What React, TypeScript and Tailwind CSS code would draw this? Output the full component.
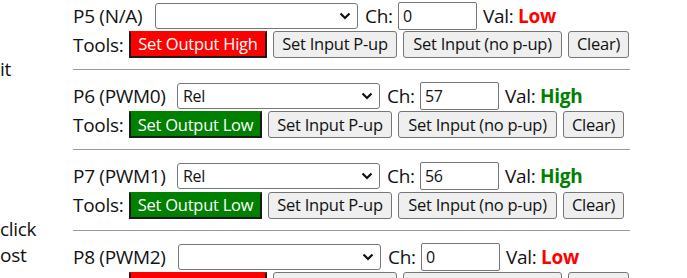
import React from 'react';

type Pin = {
  label: string;
  labelW: string;
  mode: string;
  ch: string;
  high: boolean;
};

const pins: Pin[] = [
  { label: 'P5 (N/A)', labelW: 'w-[82px]', mode: '', ch: '0', high: false },
  { label: 'P6 (PWM0)', labelW: 'w-[104px]', mode: 'Rel', ch: '57', high: true },
  { label: 'P7 (PWM1)', labelW: 'w-[104px]', mode: 'Rel', ch: '56', high: true },
  { label: 'P8 (PWM2)', labelW: 'w-[105px]', mode: '', ch: '0', high: false },
];

function Chevron() {
  return (
    <svg width="12" height="8" viewBox="0 0 12 8" className="shrink-0">
      <path d="M1.5 1.5 L6 6 L10.5 1.5" fill="none" stroke="#111" strokeWidth="2.2" />
    </svg>
  );
}

function PlainButton({ children, w }: { children: React.ReactNode; w: string }) {
  return (
    <button
      className={`${w} h-[27px] shrink-0 rounded-[3px] border border-[#767676] bg-[#efefef] text-[16.5px] leading-none tracking-[-0.25px] text-[#111]`}
    >
      {children}
    </button>
  );
}

function PinBlock({ pin }: { pin: Pin }) {
  return (
    <div className="h-[80.4px]">
      {/* Pin settings row */}
      <div className="flex h-[29px] items-center">
        <span className={`${pin.labelW} shrink-0 whitespace-nowrap`}>{pin.label}</span>
        <div className="flex h-[26px] w-[203px] shrink-0 items-center justify-between rounded-[3px] border border-[#767676] bg-white pl-[5px] pr-[6px] text-[16px]">
          <span>{pin.mode}</span>
          <Chevron />
        </div>
        <span className="ml-[7px] w-[33px] shrink-0">Ch:</span>
        <div className="flex h-[28px] w-[79px] shrink-0 items-center rounded-[2px] border border-[#767676] bg-white px-[4px] text-[16px]">
          {pin.ch}
        </div>
        <span className="ml-[6px] w-[35px] shrink-0 whitespace-nowrap">Val:</span>
        <span className={`font-bold ${pin.high ? 'text-[#008000]' : 'text-[#ff0000]'}`}>
          {pin.high ? 'High' : 'Low'}
        </span>
      </div>

      {/* Tools row */}
      <div className="flex h-[29px] items-center gap-[6px]">
        <span className="w-[50px] shrink-0">Tools:</span>
        {pin.high ? (
          <button className="h-[27px] w-[133px] shrink-0 border-2 border-[#1a1a1a] border-t-[#008000] bg-[#008000] text-[16.5px] leading-none tracking-[-0.25px] text-white">
            Set Output Low
          </button>
        ) : (
          <button className="h-[27px] w-[138px] shrink-0 border-2 border-[#1a1a1a] border-t-[#ff0000] bg-[#ff0000] text-[16.5px] leading-none tracking-[-0.25px] text-white">
            Set Output High
          </button>
        )}
        <PlainButton w="w-[124px]">Set Input P-up</PlainButton>
        <PlainButton w="w-[159px]">Set Input (no p-up)</PlainButton>
        <PlainButton w="w-[61px]">Clear)</PlainButton>
      </div>

      <hr className="mt-[10px] border-[#9a9a9a]" />
    </div>
  );
}

export default function App() {
  return (
    <div className="flex h-[278px] w-[687px] overflow-hidden bg-white font-['Open_Sans',sans-serif] text-[19px] leading-[26px] tracking-[-0.3px] text-[#111]">
      {/* Left column (scrolled off) */}
      <div className="w-[73px] shrink-0">
        <div className="mt-[56px]">it</div>
        <div className="mt-[134px]">click</div>
        <div>ost</div>
      </div>

      {/* Pin list */}
      <div className="w-[557px] shrink-0 pt-[1px]">
        {pins.map((p) => (
          <PinBlock key={p.label} pin={p} />
        ))}
      </div>
    </div>
  );
}
